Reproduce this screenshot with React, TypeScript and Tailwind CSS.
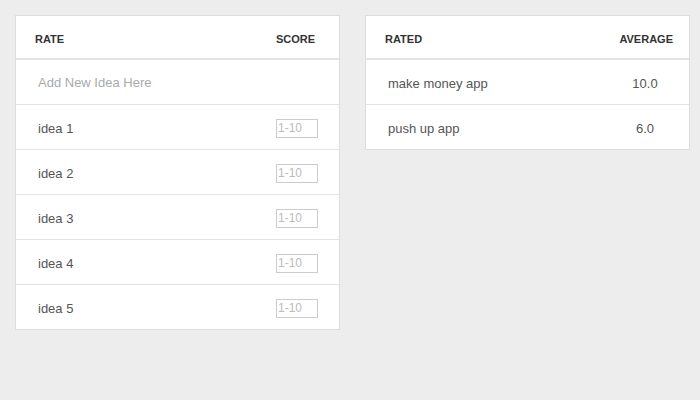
import React from 'react';

const IDEAS = ['idea 1', 'idea 2', 'idea 3', 'idea 4', 'idea 5'];
const RATED = [
  { name: 'make money app', avg: '10.0' },
  { name: 'push up app', avg: '6.0' },
];

const App: React.FC = () => {
  return (
    <div className="w-[700px] h-[400px] bg-[#ededed] flex items-start gap-[25px] pl-[15px] pt-[15px] font-['Liberation_Sans']">
      {/* Rate card */}
      <div className="w-[325px] shrink-0 bg-white border border-[#dddddd]">
        <div className="h-[44px] pt-[4px] flex items-center justify-between pl-[19px] pr-[24px] border-b-2 border-[#e3e3e3] text-[11px] font-bold text-[#333]">
          <span>RATE</span>
          <span>SCORE</span>
        </div>
        <div className="h-[45px] pt-[2px] flex items-center pl-[22px] border-b border-[#e3e3e3]">
          <input
            type="text"
            placeholder="Add New Idea Here"
            className="w-full text-[13px] text-[#555] placeholder:text-[#aaaaaa] outline-none bg-transparent"
          />
        </div>
        {IDEAS.map((idea, i) => (
          <div
            key={idea}
            className={`pt-[2px] flex items-center justify-between pl-[22px] pr-[21px] text-[13px] text-[#555] ${
              i < IDEAS.length - 1 ? 'h-[45px] border-b border-[#e3e3e3]' : 'h-[44px]'
            }`}
          >
            <span className="mt-[2px]">{idea}</span>
            <input
              type="text"
              placeholder="1-10"
              className="w-[42px] h-[19px] border border-[#cccccc] px-[1px] text-[12px] text-[#555] placeholder:text-[#bbbbbb] outline-none"
            />
          </div>
        ))}
      </div>

      {/* Rated card */}
      <div className="w-[325px] shrink-0 bg-white border border-[#dddddd]">
        <div className="h-[44px] pt-[4px] flex items-center justify-between pl-[19px] pr-[16px] border-b-2 border-[#e3e3e3] text-[11px] font-bold text-[#333]">
          <span>RATED</span>
          <span>AVERAGE</span>
        </div>
        {RATED.map((r, i) => (
          <div
            key={r.name}
            className={`pt-[4px] flex items-center justify-between pl-[22px] pr-[14px] text-[13px] text-[#555] ${
              i < RATED.length - 1 ? 'h-[45px] border-b border-[#e3e3e3]' : 'h-[44px]'
            }`}
          >
            <span>{r.name}</span>
            <span className="w-[60px] text-center">{r.avg}</span>
          </div>
        ))}
      </div>
    </div>
  );
};

export default App;
